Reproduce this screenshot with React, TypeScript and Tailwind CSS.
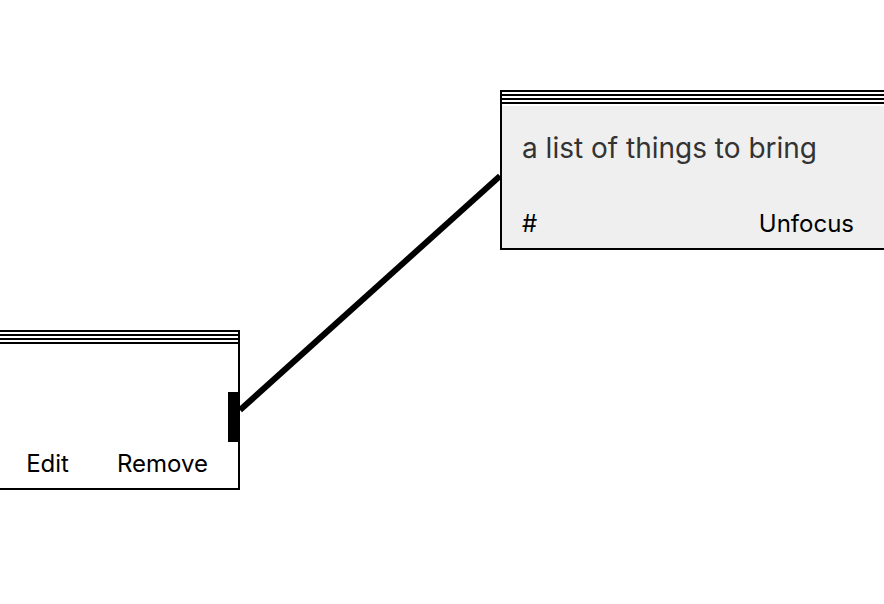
import type { ReactNode } from "react";

type NodeCardProps = {
  className: string;
  children: ReactNode;
};

function DragHandle() {
  return (
    <div className="flex h-3.5 cursor-move flex-col gap-0.5 bg-white pt-0.5">
      <div className="h-0.5 bg-black" />
      <div className="h-0.5 bg-black" />
      <div className="h-0.5 bg-black" />
    </div>
  );
}

function NodeCard({ className, children }: NodeCardProps) {
  return (
    <section className={`absolute flex h-40 flex-col border-y-2 border-black ${className}`}>
      <DragHandle />
      {children}
    </section>
  );
}

export default function App() {
  return (
    <main className="relative min-h-screen overflow-hidden bg-white font-['Inter','Liberation_Sans',sans-serif] text-black">
      <svg className="absolute inset-0 h-full w-full" aria-hidden="true">
        <line x1="240" y1="410" x2="500" y2="176" stroke="black" strokeWidth="6" />
      </svg>

      <NodeCard className="top-[330px] left-0 w-60 border-r-2 bg-white">
        <div className="flex flex-1 items-end justify-end gap-12 pr-[30px] pb-2 text-2xl">
          <button type="button">Edit</button>
          <button type="button">Remove</button>
        </div>
        <div className="absolute top-[60px] right-0 h-[50px] w-2.5 bg-black" />
      </NodeCard>

      <NodeCard className="top-[90px] right-0 left-[500px] border-l-2 bg-[#efefef]">
        <p className="px-5 pt-6 text-[28px] leading-9 whitespace-nowrap text-[#333]">
          a list of things to bring
        </p>
        <div className="flex flex-1 items-end justify-between pr-[30px] pb-2 pl-5 text-2xl">
          <button type="button">#</button>
          <button type="button">Unfocus</button>
        </div>
      </NodeCard>
    </main>
  );
}
